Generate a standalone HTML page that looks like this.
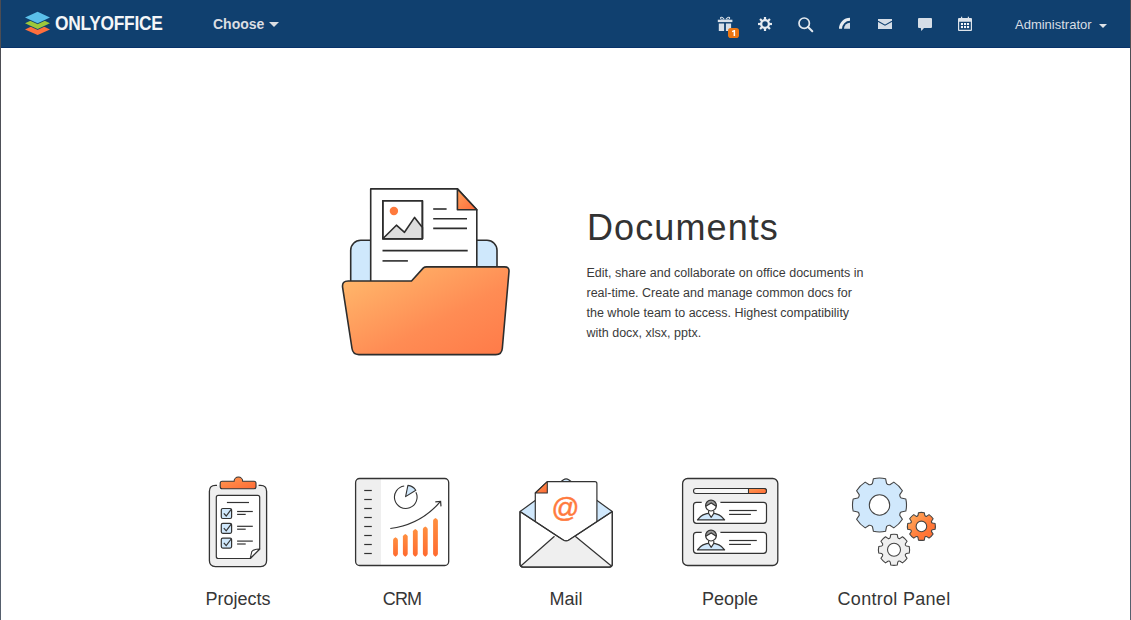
<!DOCTYPE html>
<html><head><meta charset="utf-8">
<style>
html,body{margin:0;padding:0;width:1131px;height:620px;overflow:hidden;background:#fff;font-family:"Liberation Sans",sans-serif;}
#frame{position:absolute;left:0;top:0;width:1131px;height:620px;}
#hdr{position:absolute;left:0;top:0;width:1131px;height:47px;background:#10406f;border-bottom:1px solid #08336a;}
.abs{position:absolute;white-space:nowrap;line-height:1;}
#bl{position:absolute;left:0;top:0;width:1px;height:620px;background:linear-gradient(#4c4c52,#56606e);}
#br{position:absolute;left:1130px;top:0;width:1px;height:620px;background:linear-gradient(#4c4c52,#56606e);}
.lbl{position:absolute;top:589.7px;width:164px;text-align:center;font-size:18px;line-height:1;color:#363636;white-space:nowrap;}
svg{position:absolute;overflow:visible;}
</style></head>
<body>
<div id="frame">
<div id="hdr"></div>

<!-- logo -->
<svg style="left:0;top:0" width="60" height="47" viewBox="0 0 60 47">
  <polygon points="37.6,23.6 50,29.4 37.6,35 25,29.4" fill="#ff6f3d"/>
  <polygon points="37.6,17.6 50,23.3 37.6,29 25,23.3" fill="none" stroke="#10406f" stroke-width="1.8" stroke-linejoin="round"/>
  <polygon points="37.6,17.6 50,23.3 37.6,29 25,23.3" fill="#9dc83b"/>
  <polygon points="37.6,11.8 50,17.5 37.6,23.3 25,17.5" fill="none" stroke="#10406f" stroke-width="1.8" stroke-linejoin="round"/>
  <polygon points="37.6,11.8 50,17.5 37.6,23.3 25,17.5" fill="#5bc0ea"/>
</svg>
<div class="abs" style="left:55px;top:13.7px;font-size:19.5px;font-weight:700;color:#f4f6f8;letter-spacing:-0.3px;transform:scaleX(0.89);transform-origin:0 0;">ONLYOFFICE</div>

<div class="abs" style="left:213px;top:17.2px;font-size:14px;font-weight:700;color:#dcdee2;">Choose</div>
<svg style="left:269px;top:22px" width="10" height="5" viewBox="0 0 10 5"><polygon points="0,0 10,0 5,5" fill="#dcdee2"/></svg>

<div class="abs" style="left:1015px;top:18.1px;font-size:13px;color:#d8dee5;">Administrator</div>
<svg style="left:1099px;top:24px" width="8" height="4" viewBox="0 0 8 4"><polygon points="0,0 8,0 4,4" fill="#dfe3e8"/></svg>

<!-- header icons -->
<svg style="left:700px;top:0" width="300" height="47" viewBox="700 0 300 47">
  <!-- gift -->
  <g fill="#d9e0e8">
    <path d="M722,19.6 C720,19.8 719.2,17.2 721.2,16.8 C722.6,16.5 724.2,18.2 724.8,19.6 Z M723.2,19 C722.6,18.2 721.9,17.6 721.4,17.8 C720.8,18 721.2,19 722,19 Z" fill-rule="evenodd"/>
    <path d="M728.2,19.6 C730.2,19.8 731,17.2 729,16.8 C727.6,16.5 726,18.2 725.4,19.6 Z M727,19 C727.6,18.2 728.3,17.6 728.8,17.8 C729.4,18 729,19 728.2,19 Z" fill-rule="evenodd"/>
    <rect x="717.8" y="19.7" width="14.6" height="2.4"/>
    <rect x="718.8" y="23.5" width="5.3" height="7.5"/>
    <rect x="725.9" y="23.5" width="5.2" height="7.5"/>
  </g>
  <rect x="728" y="28" width="11" height="10" rx="2.8" fill="#eb7613"/>
  <path d="M731.9,30.9 L734,29.9 L735.1,29.9 L735.1,36.1 L733.6,36.1 L733.6,31.7 L732.3,32.2 Z" fill="#fff"/>
  <!-- gear -->
  <g fill="#e6ebf0">
    <circle cx="765" cy="24" r="3.85" fill="none" stroke="#e6ebf0" stroke-width="2.2"/>
    <g>
      <rect x="763.9" y="17" width="2.2" height="3.5"/>
      <rect x="763.9" y="17" width="2.2" height="3.5" transform="rotate(45 765 24)"/>
      <rect x="763.9" y="17" width="2.2" height="3.5" transform="rotate(90 765 24)"/>
      <rect x="763.9" y="17" width="2.2" height="3.5" transform="rotate(135 765 24)"/>
      <rect x="763.9" y="17" width="2.2" height="3.5" transform="rotate(180 765 24)"/>
      <rect x="763.9" y="17" width="2.2" height="3.5" transform="rotate(225 765 24)"/>
      <rect x="763.9" y="17" width="2.2" height="3.5" transform="rotate(270 765 24)"/>
      <rect x="763.9" y="17" width="2.2" height="3.5" transform="rotate(315 765 24)"/>
    </g>
  </g>
  <!-- search -->
  <circle cx="804.2" cy="23.2" r="5.2" fill="none" stroke="#e2e8ee" stroke-width="1.7"/>
  <line x1="808" y1="27" x2="812.3" y2="31.3" stroke="#e2e8ee" stroke-width="2" stroke-linecap="round"/>
  <!-- feed -->
  <path d="M839,28.8 A11,11 0 0 1 850,17.8 L850,20.8 A8,8 0 0 0 842,28.8 Z" fill="#e6ebf0"/>
  <path d="M844,28.8 A6,6 0 0 1 850,22.8 L850,28.8 Z" fill="#d3dce6"/>
  <!-- mail -->
  <rect x="878" y="19" width="14" height="10" fill="#d6dee7"/>
  <path d="M878,21.2 L885,25.2 L892,21.2" fill="none" stroke="#10406f" stroke-width="1.1"/>
  <!-- chat -->
  <path d="M919,18 L931,18 Q932,18 932,19 L932,27 Q932,28 931,28 L924,28 L921.3,31 L920.8,28 L919,28 Q918,28 918,27 L918,19 Q918,18 919,18 Z" fill="#d6dee7"/>
  <!-- calendar -->
  <path d="M959,18 L971,18 Q972,18 972,19 L972,30 Q972,31 971,31 L959,31 Q958,31 958,30 L958,19 Q958,18 959,18 Z M959.2,21.8 L959.2,29.8 L970.8,29.8 L970.8,21.8 Z" fill="#dde4eb" fill-rule="evenodd"/>
  <rect x="961" y="16.7" width="1.2" height="2" fill="#dde4eb"/>
  <rect x="967.8" y="16.7" width="1.2" height="2" fill="#dde4eb"/>
  <g fill="#f2f5f8">
    <rect x="960.9" y="23" width="2.1" height="2.1"/><rect x="964" y="23" width="2.1" height="2.1"/><rect x="967" y="23" width="2.1" height="2.1"/>
    <rect x="960.9" y="26" width="2.1" height="2.1"/><rect x="964" y="26" width="2.1" height="2.1"/><rect x="967" y="26" width="2.1" height="2.1"/>
  </g>
</svg>

<!-- borders -->
<div id="bl"></div><div id="br"></div>

<!-- folder illustration -->
<svg style="left:0;top:0" width="1131" height="620" viewBox="0 0 1131 620">
  <defs>
    <linearGradient id="og" x1="0" y1="0" x2="1" y2="1">
      <stop offset="0" stop-color="#ffbd6e"/>
      <stop offset="0.6" stop-color="#ff8c54"/>
      <stop offset="1" stop-color="#ff7a48"/>
    </linearGradient>
    <linearGradient id="og2" x1="0" y1="0" x2="1" y2="1">
      <stop offset="0" stop-color="#ffa35c"/>
      <stop offset="1" stop-color="#ff6a3a"/>
    </linearGradient>
  </defs>
  <g stroke="#2d2d2d" stroke-width="1.6" stroke-linejoin="round">
    <rect x="350.7" y="240.3" width="146.3" height="60" rx="10" fill="#cfe8fc"/>
    <path d="M370.7,300 L370.7,188.9 L457.4,188.9 L476.8,209.8 L476.8,300" fill="#fff"/>
    <path d="M457.4,188.9 L476.8,209.8 L457.4,209.8 Z" fill="url(#og2)"/>
    <rect x="382.8" y="200.8" width="39.6" height="38" fill="#fff"/>
    <path d="M382.8,238.8 L396.4,225.2 L404.5,232.3 L414.6,217.4 L422.4,227.6 L422.4,238.8 Z" fill="#dedede"/>
    <rect x="382.8" y="200.8" width="39.6" height="38" fill="none"/>
  </g>
  <circle cx="393.9" cy="211" r="4.2" fill="#ff7a3d"/>
  <g stroke="#2d2d2d" stroke-width="1.6">
    <line x1="433.2" y1="209" x2="446.6" y2="209"/>
    <line x1="433.2" y1="218.7" x2="467" y2="218.7"/>
    <line x1="433.2" y1="228.4" x2="467" y2="228.4"/>
    <line x1="382.5" y1="250.6" x2="467.7" y2="250.6"/>
    <line x1="382.5" y1="260.9" x2="407.9" y2="260.9"/>
  </g>
  <path d="M426.6,266.9 L504.6,266.9 Q509.4,266.9 509,271.5 L502.3,348.5 Q501.8,354.6 495.8,354.6 L358.8,354.6 Q352.9,354.6 352,348.5 L342.6,287.3 Q341.8,281 348.2,281 L411.5,281 L423.4,267.9 Q424.5,266.9 426.6,266.9 Z" fill="url(#og)" stroke="#2d2d2d" stroke-width="1.6" stroke-linejoin="round"/>
</svg>

<!-- main title -->
<div class="abs" style="left:587px;top:209.5px;font-size:36px;color:#333;letter-spacing:1.1px;">Documents</div>
<div class="abs" style="left:586.5px;top:263.4px;font-size:12.5px;line-height:20px;color:#3a3a3a;">Edit, share and collaborate on office documents in<br>real-time. Create and manage common docs for<br>the whole team to access. Highest compatibility<br>with docx, xlsx, pptx.</div>

<!-- bottom icons -->
<svg style="left:0;top:0" width="1131" height="620" viewBox="0 0 1131 620">
  <defs>
    <linearGradient id="clipg" x1="0" y1="0" x2="1" y2="1">
      <stop offset="0" stop-color="#ff9a52"/><stop offset="1" stop-color="#ff6a35"/>
    </linearGradient>
    <linearGradient id="barg" x1="0" y1="0" x2="0" y2="1">
      <stop offset="0" stop-color="#ff8f3f"/><stop offset="1" stop-color="#ff6a30"/>
    </linearGradient>
    <linearGradient id="gearg" x1="0" y1="0" x2="1" y2="1">
      <stop offset="0" stop-color="#ffb462"/><stop offset="0.6" stop-color="#ff7a3a"/><stop offset="1" stop-color="#ff6a30"/>
    </linearGradient>
    <clipPath id="crmclip"><rect x="355.6" y="478.5" width="93.1" height="87" rx="4"/></clipPath>
  </defs>

  <!-- Projects -->
  <path d="M215.4,485.3 L217,485.3 L258.6,485.3 L260.6,485.3 Q266.6,485.3 266.6,491.3 L266.6,560.6 Q266.6,566.6 260.6,566.6 L215.4,566.6 Q209.4,566.6 209.4,560.6 L209.4,491.3 Q209.4,485.3 215.4,485.3 Z" fill="#efefef"/>
  <path d="M217,485.3 L215.4,485.3 Q209.4,485.3 209.4,491.3 L209.4,560.6 Q209.4,566.6 215.4,566.6 L260.6,566.6 Q266.6,566.6 266.6,560.6 L266.6,491.3 Q266.6,485.3 260.6,485.3 L258.6,485.3" fill="none" stroke="#333" stroke-width="1.3"/>
  <path d="M222.2,481.3 L234.1,481.3 A4.3,4.3 0 0 1 242.7,481.3 L254,481.3 Q256,481.3 256,483.3 L256,486.8 Q256,488.8 254,488.8 L222.2,488.8 Q220.2,488.8 220.2,486.8 L220.2,483.3 Q220.2,481.3 222.2,481.3 Z" fill="url(#clipg)" stroke="#333" stroke-width="1.1"/>
  <path d="M218.3,495.4 L257.7,495.4 Q259.7,495.4 259.7,497.4 L259.7,549 L250.2,558.5 L218.3,558.5 Q216.3,558.5 216.3,556.5 L216.3,497.4 Q216.3,495.4 218.3,495.4 Z" fill="#fff" stroke="#333" stroke-width="1.2" stroke-linejoin="round"/>
  <path d="M259.7,549 L250.2,558.5 Q251.5,553 251.8,551.5 Q253,549.3 259.7,549 Z" fill="#fff" stroke="#333" stroke-width="1.1" stroke-linejoin="round"/>
  <g stroke="#333" stroke-width="1.2" fill="none">
    <line x1="226.9" y1="502.5" x2="249" y2="502.5"/>
    <rect x="221.3" y="508.5" width="10.3" height="10" rx="1.5" fill="#d0e8fc"/>
    <rect x="221.3" y="523.3" width="10.3" height="10" rx="1.5" fill="#d0e8fc"/>
    <rect x="221.3" y="538.1" width="10.3" height="10" rx="1.5" fill="#d0e8fc"/>
    <path d="M223.8,513.3 L226.2,516 L231.2,509.4"/>
    <path d="M223.8,528.1 L226.2,530.8 L231.2,524.2"/>
    <path d="M223.8,542.9 L226.2,545.6 L231.2,539"/>
    <line x1="237.1" y1="511.5" x2="252.8" y2="511.5"/>
    <line x1="237.1" y1="514.4" x2="245.7" y2="514.4"/>
    <line x1="237.1" y1="526.3" x2="252.8" y2="526.3"/>
    <line x1="237.1" y1="529.2" x2="245.7" y2="529.2"/>
    <line x1="237.1" y1="541.1" x2="252.8" y2="541.1"/>
    <line x1="237.1" y1="544" x2="245.7" y2="544"/>
  </g>

  <!-- CRM -->
  <rect x="355.6" y="478.5" width="93.1" height="87" rx="4" fill="#fff"/>
  <rect x="355.6" y="478.5" width="25.4" height="87" fill="#efefef" clip-path="url(#crmclip)"/>
  <rect x="355.6" y="478.5" width="93.1" height="87" rx="4" fill="none" stroke="#333" stroke-width="1.3"/>
  <g stroke="#333" stroke-width="1.2">
    <line x1="364.2" y1="490.5" x2="371.8" y2="490.5"/>
    <line x1="364.2" y1="499.5" x2="371.8" y2="499.5"/>
    <line x1="364.2" y1="508.5" x2="371.8" y2="508.5"/>
    <line x1="364.2" y1="517.5" x2="371.8" y2="517.5"/>
    <line x1="364.2" y1="526.5" x2="371.8" y2="526.5"/>
    <line x1="364.2" y1="535.5" x2="371.8" y2="535.5"/>
    <line x1="364.2" y1="544.5" x2="371.8" y2="544.5"/>
    <line x1="364.2" y1="553.5" x2="371.8" y2="553.5"/>
  </g>
  <path d="M415.9,492.2 A11.3,11.3 0 1 1 404.2,486" fill="none" stroke="#333" stroke-width="1.1"/>
  <path d="M405.6,496.6 L407.9,485.4 A11.3,11.3 0 0 1 415.8,490.2 Z" fill="#d0e8fc" stroke="#333" stroke-width="1.1" stroke-linejoin="round"/>
  <path d="M390.3,528.5 C410,526 428,516 440.3,501.6" fill="none" stroke="#333" stroke-width="1.2"/>
  <path d="M435.3,501.9 L440.6,501.4 L441,506.4" fill="none" stroke="#333" stroke-width="1.2"/>
  <g fill="url(#barg)">
    <path d="M393.1,539.9 L393.1,539.9 Q393.1,538.5 395.5,537.3 Q397.9,538.5 397.9,539.9 L397.9,554.1 Q397.9,555.5 395.5,556.7 Q393.1,555.5 393.1,554.1 Z"/>
    <path d="M402.9,536.6 L402.9,536.6 Q402.9,535.2 405.3,534.0 Q407.7,535.2 407.7,536.6 L407.7,554.1 Q407.7,555.5 405.3,556.7 Q402.9,555.5 402.9,554.1 Z"/>
    <path d="M412.9,531.6 L412.9,531.6 Q412.9,530.2 415.3,529.0 Q417.7,530.2 417.7,531.6 L417.7,554.1 Q417.7,555.5 415.3,556.7 Q412.9,555.5 412.9,554.1 Z"/>
    <path d="M422.9,529.0 L422.9,529.0 Q422.9,527.6 425.3,526.4 Q427.7,527.6 427.7,529.0 L427.7,554.1 Q427.7,555.5 425.3,556.7 Q422.9,555.5 422.9,554.1 Z"/>
    <path d="M433.1,520.6 L433.1,520.6 Q433.1,519.2 435.5,518.0 Q437.9,519.2 437.9,520.6 L437.9,554.1 Q437.9,555.5 435.5,556.7 Q433.1,555.5 433.1,554.1 Z"/>
  </g>

  <!-- Mail -->
  <path d="M520,511.6 L563.5,479.8 Q566.1,478 568.7,479.8 L612.3,511.6 L612.3,560 L520,560 Z" fill="#d0e8fc"/>
  <path d="M520,511.6 L563.5,479.8 Q566.1,478 568.7,479.8 L612.3,511.6" fill="none" stroke="#333" stroke-width="1.2" stroke-linejoin="round"/>
  <path d="M547.3,481.7 L594.9,481.7 Q596.9,481.7 596.9,483.7 L596.9,560 L535.3,560 L535.3,493 Z" fill="#fff" stroke="#333" stroke-width="1.2" stroke-linejoin="round"/>
  <path d="M547.3,481.7 L547.3,493 L535.3,493 Z" fill="url(#clipg)" stroke="#333" stroke-width="1.1" stroke-linejoin="round"/>
  <path d="M520,511.6 L563.2,540 Q566.1,541.9 569,540 L612.3,511.6 L612.3,564 Q612.3,567.1 609.2,567.1 L523.1,567.1 Q520,567.1 520,564 Z" fill="#fff" stroke="#333" stroke-width="1.2" stroke-linejoin="round"/>
  <path d="M521,566 L554.5,536.2 L563.2,540 Q566.1,541.9 569,540 L575.2,536.2 L611.4,566 Z" fill="#efefef"/>
  <path d="M520.8,566 L554.5,536.2 M611.4,566 L575.2,536.2" stroke="#333" stroke-width="1.2"/>
  <path d="M520,511.6 L563.2,540 Q566.1,541.9 569,540 L612.3,511.6" fill="none" stroke="#333" stroke-width="1.2" stroke-linejoin="round"/>
  <path d="M520,511.6 L520,564 Q520,567.1 523.1,567.1 L609.2,567.1 Q612.3,567.1 612.3,564 L612.3,511.6" fill="none" stroke="#333" stroke-width="1.2"/>

  <!-- People -->
  <rect x="682.6" y="478.5" width="95.2" height="87" rx="5" fill="#efefef" stroke="#333" stroke-width="1.3"/>
  <rect x="693.5" y="488.5" width="73" height="5" rx="2.5" fill="#f7f7f7" stroke="#333" stroke-width="1.1"/>
  <path d="M748.5,488.5 L764,488.5 A2.5,2.5 0 0 1 764,493.5 L748.5,493.5 Z" fill="url(#clipg)" stroke="#333" stroke-width="1.1"/>
  <g id="card">
    <path d="M701.7,502.3 L696.5,502.3 Q693.5,502.3 693.5,505.3 L693.5,520.3 Q693.5,523.3 696.5,523.3 L763.5,523.3 Q766.5,523.3 766.5,520.3 L766.5,505.3 Q766.5,502.3 763.5,502.3 L720.4,502.3" fill="#fff"/>
    <path d="M701.7,502.3 L696.5,502.3 Q693.5,502.3 693.5,505.3 L693.5,520.3 Q693.5,523.3 696.5,523.3 L763.5,523.3 Q766.5,523.3 766.5,520.3 L766.5,505.3 Q766.5,502.3 763.5,502.3 L720.4,502.3" fill="none" stroke="#333" stroke-width="1.2"/>
    <path d="M697.5,519.9 C700.5,515.2 705.5,513.1 711,513.1 C716.5,513.1 721.5,515.2 724.6,519.9 Z" fill="#d0e8fc" stroke="#333" stroke-width="1.2" stroke-linejoin="round"/>
    <path d="M708.6,511 L708.6,513.4 L711.2,517.4 L713.8,513.4 L713.8,511" fill="#fff" stroke="#333" stroke-width="1.1" stroke-linejoin="round"/>
    <circle cx="711" cy="505.6" r="5.4" fill="#fff"/>
    <path d="M705.6,505.6 A5.4,5.4 0 0 1 716.4,505.6 L716.3,506.4 L711.2,503.2 L705.7,506.4 Z" fill="#9a9a9a"/>
    <circle cx="711" cy="505.6" r="5.4" fill="none" stroke="#333" stroke-width="1.2"/>
    <path d="M705.8,506.3 L711.2,503 L716.2,506.3" fill="none" stroke="#333" stroke-width="1.1"/>
    <line x1="729.1" y1="510.5" x2="756.8" y2="510.5" stroke="#333" stroke-width="1.2"/>
    <line x1="729.1" y1="514.4" x2="750.9" y2="514.4" stroke="#333" stroke-width="1.2"/>
  </g>
  <use href="#card" transform="translate(0,30)"/>

  <!-- Control Panel -->
  <path d="M873.43,478.69 A27.00,27.00 0 0 1 885.57,478.69 L886.55,483.32 Q887.77,485.04 889.85,484.69 L893.81,482.10 A27.00,27.00 0 0 1 902.40,490.69 L899.81,494.65 Q899.46,496.73 901.18,497.95 L905.81,498.93 A27.00,27.00 0 0 1 905.81,511.07 L901.18,512.05 Q899.46,513.27 899.81,515.35 L902.40,519.31 A27.00,27.00 0 0 1 893.81,527.90 L889.85,525.31 Q887.77,524.96 886.55,526.68 L885.57,531.31 A27.00,27.00 0 0 1 873.43,531.31 L872.45,526.68 Q871.23,524.96 869.15,525.31 L865.19,527.90 A27.00,27.00 0 0 1 856.60,519.31 L859.19,515.35 Q859.54,513.27 857.82,512.05 L853.19,511.07 A27.00,27.00 0 0 1 853.19,498.93 L857.82,497.95 Q859.54,496.73 859.19,494.65 L856.60,490.69 A27.00,27.00 0 0 1 865.19,482.10 L869.15,484.69 Q871.23,485.04 872.45,483.32 Z" fill="#d0e8fc" stroke="#444" stroke-width="1.1" stroke-linejoin="round"/>
  <circle cx="879.5" cy="505" r="10.2" fill="#fff" stroke="#444" stroke-width="1.1"/>
  <path d="M918.49,512.71 A14.00,14.00 0 0 1 924.31,512.71 L924.79,515.31 Q925.38,516.79 926.85,516.16 L929.02,514.66 A14.00,14.00 0 0 1 933.14,518.78 L931.64,520.95 Q931.01,522.42 932.49,523.01 L935.09,523.49 A14.00,14.00 0 0 1 935.09,529.31 L932.49,529.79 Q931.01,530.38 931.64,531.85 L933.14,534.02 A14.00,14.00 0 0 1 929.02,538.14 L926.85,536.64 Q925.38,536.01 924.79,537.49 L924.31,540.09 A14.00,14.00 0 0 1 918.49,540.09 L918.01,537.49 Q917.42,536.01 915.95,536.64 L913.78,538.14 A14.00,14.00 0 0 1 909.66,534.02 L911.16,531.85 Q911.79,530.38 910.31,529.79 L907.71,529.31 A14.00,14.00 0 0 1 907.71,523.49 L910.31,523.01 Q911.79,522.42 911.16,520.95 L909.66,518.78 A14.00,14.00 0 0 1 913.78,514.66 L915.95,516.16 Q917.42,516.79 918.01,515.31 Z" fill="url(#gearg)" stroke="#444" stroke-width="1.1" stroke-linejoin="round"/>
  <circle cx="921.4" cy="526.4" r="5.3" fill="#fff" stroke="#444" stroke-width="1.1"/>
  <path d="M890.76,534.54 A15.60,15.60 0 0 1 897.24,534.54 L897.77,537.46 Q898.48,538.99 900.06,538.41 L902.50,536.72 A15.60,15.60 0 0 1 907.08,541.30 L905.39,543.74 Q904.81,545.32 906.34,546.03 L909.26,546.56 A15.60,15.60 0 0 1 909.26,553.04 L906.34,553.57 Q904.81,554.28 905.39,555.86 L907.08,558.30 A15.60,15.60 0 0 1 902.50,562.88 L900.06,561.19 Q898.48,560.61 897.77,562.14 L897.24,565.06 A15.60,15.60 0 0 1 890.76,565.06 L890.23,562.14 Q889.52,560.61 887.94,561.19 L885.50,562.88 A15.60,15.60 0 0 1 880.92,558.30 L882.61,555.86 Q883.19,554.28 881.66,553.57 L878.74,553.04 A15.60,15.60 0 0 1 878.74,546.56 L881.66,546.03 Q883.19,545.32 882.61,543.74 L880.92,541.30 A15.60,15.60 0 0 1 885.50,536.72 L887.94,538.41 Q889.52,538.99 890.23,537.46 Z" fill="#efefef" stroke="#444" stroke-width="1.1" stroke-linejoin="round"/>
  <circle cx="894" cy="549.8" r="6.5" fill="#fff" stroke="#444" stroke-width="1.1"/>
</svg>

<div class="abs" id="at" style="left:551.5px;top:494px;font-size:27.5px;color:#ff7a3d;-webkit-text-stroke:0.5px #ff7a3d;">@</div>
<!-- labels -->
<div class="lbl" style="left:156px">Projects</div>
<div class="lbl" style="left:320px;letter-spacing:-0.9px">CRM</div>
<div class="lbl" style="left:484px">Mail</div>
<div class="lbl" style="left:648px">People</div>
<div class="lbl" style="left:812px;letter-spacing:0.3px">Control Panel</div>

</div>
</body></html>
